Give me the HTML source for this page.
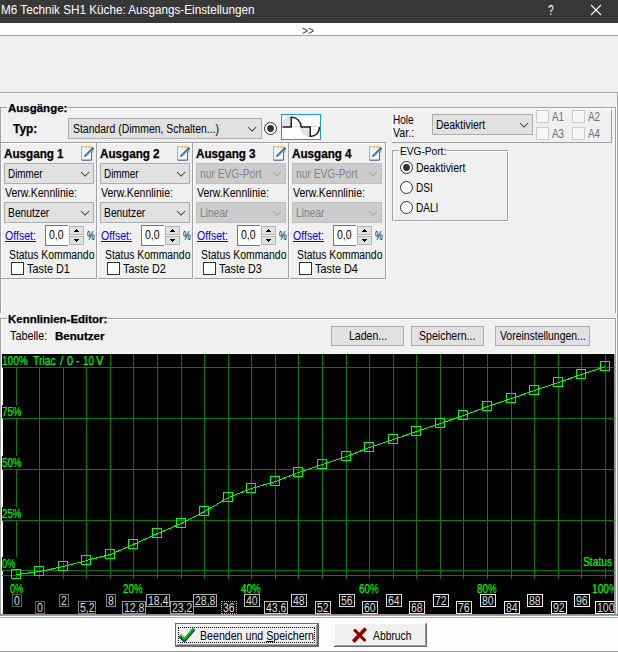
<!DOCTYPE html>
<html><head><meta charset="utf-8"><title>M6 Technik SH1 Küche: Ausgangs-Einstellungen</title>
<style>
html,body{margin:0;padding:0;}
body{width:618px;height:652px;background:#f0f0f0;position:relative;overflow:hidden;font-family:"Liberation Sans",sans-serif;font-size:11px;}
body>div,body>span,body>svg{position:absolute;box-sizing:content-box;}
.t{white-space:nowrap;transform-origin:0 50%;display:block;}
</style></head><body>
<div style="left:0px;top:0px;width:618px;height:23px;background:#383838;"></div>
<span class="t" style="left:1.20px;top:1.50px;height:16px;line-height:16px;font-size:12px;color:#fff;transform:scaleX(0.9752);">M6 Technik SH1 Küche: Ausgangs-Einstellungen</span>
<span class="t" style="left:548.40px;top:2.20px;height:16px;line-height:16px;font-size:14px;color:#fff;transform:scaleX(0.7192);">?</span>
<svg style="left:590px;top:4px" width="12" height="12" viewBox="0 0 12 12"><path d="M1 1 L11 11 M11 1 L1 11" stroke="#fff" stroke-width="1.2" fill="none"/></svg>
<div style="left:0px;top:23px;width:618px;height:12px;background:#fff;"></div>
<span class="t" style="left:302.00px;top:22.50px;height:16px;line-height:16px;font-size:13px;color:#2e3f58;transform:scaleX(0.7837);">&gt;&gt;</span>
<div style="left:0px;top:35px;width:618px;height:1px;background:#a0a0a0;"></div>
<div style="left:0px;top:92px;width:618px;height:1px;background:#a0a0a0;"></div>
<div style="left:0px;top:93px;width:617px;height:1px;background:#ffffff;"></div>
<div style="left:617px;top:92px;width:1px;height:526px;background:#a0a0a0;"></div>
<div style="left:0px;top:107px;width:616px;height:1px;background:#a0a0a0;"></div>
<div style="left:1px;top:108px;width:615px;height:1px;background:#ffffff;"></div>
<div style="left:0px;top:107px;width:1px;height:206px;background:#a0a0a0;"></div>
<div style="left:1px;top:108px;width:1px;height:205px;background:#ffffff;"></div>
<div style="left:615px;top:107px;width:1px;height:206px;background:#a0a0a0;"></div>
<div style="left:616px;top:107px;width:1px;height:206px;background:#ffffff;"></div>
<span class="t" style="left:8.20px;top:100.00px;height:16px;line-height:16px;font-size:11px;color:#000;transform:scaleX(1.0433);font-weight:bold;-webkit-text-stroke:0.25px #000;background:#f0f0f0;padding:0 0 0 1px;margin-left:-1px;">Ausgänge:</span>
<span class="t" style="left:12.60px;top:121.00px;height:16px;line-height:16px;font-size:12.5px;color:#000;transform:scaleX(0.9505);font-weight:bold;-webkit-text-stroke:0.25px #000;">Typ:</span>
<div style="left:68px;top:118px;width:192px;height:19px;background:#e1e1e1;border:1px solid #adadad;"></div>
<span class="t" style="left:72.60px;top:121.00px;height:16px;line-height:16px;font-size:12.5px;color:#000;transform:scaleX(0.8339);">Standard (Dimmen, Schalten...)</span>
<svg style="left:247px;top:125.9px" width="11" height="7" viewBox="-1 -1 11 7"><path d="M0 0 L4.1 4.1 L8.2 0" fill="none" stroke="#404040" stroke-width="1.05"/></svg>
<svg style="left:264px;top:122px" width="13" height="13" viewBox="0 0 13 13"><circle cx="6.5" cy="6.5" r="6" fill="#fff" stroke="#333" stroke-width="1"/><circle cx="6.5" cy="6.5" r="3.4" fill="#333"/></svg>
<div style="left:281px;top:114px;width:38px;height:24px;background:#fff;border:1px solid #1c96e4;"></div>
<svg style="left:282px;top:115px" width="38" height="24" viewBox="282 115 38 24">
<defs><pattern id="h" width="2.5" height="2.5" patternUnits="userSpaceOnUse"><path d="M0 2.5 L2.5 0" stroke="#c4c4c4" stroke-width="0.7"/></pattern></defs>
<path d="M282.3 126.7 C282.5 121 286 117.2 291.5 117 L291.5 126.7 Z" fill="#f1f1f1" stroke="#c0c0c0" stroke-width="0.6"/>
<path d="M282.3 126.7 C282.5 121 286 117.2 291.5 117 L291.5 126.7 Z" fill="url(#h)"/>
<path d="M301 126.7 C301.3 132.5 305 136.4 310.5 136.5 L310.5 126.7 Z" fill="#f1f1f1" stroke="#c0c0c0" stroke-width="0.6"/>
<path d="M301 126.7 C301.3 132.5 305 136.4 310.5 136.5 L310.5 126.7 Z" fill="url(#h)"/>
<path d="M282 126.6 L320 126.6" stroke="#dcdcdc" stroke-width="1"/>
<path d="M282.5 126.9 L291.2 126.9 L291.2 117.3 C296.5 117 300.8 121 301.2 126.9 L310.2 126.9 L310.2 136.2 C315.5 136.7 319.2 133 319.6 126.9" fill="none" stroke="#202020" stroke-width="1.5" stroke-linejoin="miter"/>
</svg>
<div style="left:1px;top:142px;width:385px;height:1px;background:#a0a0a0;"></div>
<div style="left:2px;top:143px;width:383px;height:1px;background:#ffffff;"></div>
<div style="left:1px;top:278px;width:385px;height:1px;background:#a0a0a0;"></div>
<div style="left:1px;top:279px;width:386px;height:1px;background:#f8f8f8;"></div>
<div style="left:96px;top:142px;width:1px;height:137px;background:#a0a0a0;"></div>
<div style="left:97px;top:143px;width:1px;height:136px;background:#ffffff;"></div>
<span class="t" style="left:4.00px;top:146.00px;height:16px;line-height:16px;font-size:12.5px;color:#000;transform:scaleX(0.9327);font-weight:bold;-webkit-text-stroke:0.25px #000;">Ausgang 1</span>
<svg style="left:79px;top:144px" width="16" height="18" viewBox="0 0 16 18">
<rect x="2.5" y="2.6" width="10" height="13.6" rx="0.8" fill="#edf7f1" stroke="none"/>
<path d="M2.5 3 L2.5 16" stroke="#6f9be2" stroke-width="1" stroke-dasharray="1.6 0.7"/>
<path d="M2.6 16.2 L12.4 16.2" stroke="#3d5c9b" stroke-width="1.1"/>
<path d="M12.6 7.5 L12.6 16.2" stroke="#50608a" stroke-width="1"/>
<path d="M2.3 2.7 L12 2.7" stroke="#f2a338" stroke-width="1.5" stroke-dasharray="1.3 0.9"/>
<path d="M4.8 4.5 L9 4.5 M4.5 13.8 L11 13.8" stroke="#ffffff" stroke-width="1.2"/>
<path d="M4.9 13.1 L6.0 12.0" stroke="#cfe0f0" stroke-width="1.4"/>
<path d="M5.7 12.3 L13.5 4.5" stroke="#1f70cc" stroke-width="1.9"/>
<path d="M6.0 11.2 L12.9 4.3" stroke="#6db0ee" stroke-width="0.6"/>
<path d="M13.0 5.0 L14.3 3.7" stroke="#3c4558" stroke-width="2.1"/>
<path d="M14.1 5.6 L13.6 8.2" stroke="#7a8294" stroke-width="1"/>
</svg>
<div style="left:4px;top:163px;width:88px;height:19px;background:#e1e1e1;border:1px solid #adadad;"></div>
<span class="t" style="left:8.40px;top:166.00px;height:16px;line-height:16px;font-size:12.5px;color:#000;transform:scaleX(0.7909);">Dimmer</span>
<svg style="left:80px;top:170.6px" width="11" height="7" viewBox="-1 -1 11 7"><path d="M0 0 L4.1 4.1 L8.2 0" fill="none" stroke="#404040" stroke-width="1.05"/></svg>
<span class="t" style="left:4.70px;top:185.00px;height:16px;line-height:16px;font-size:12.5px;color:#000;transform:scaleX(0.8412);">Verw.Kennlinie:</span>
<div style="left:4px;top:202px;width:88px;height:19px;background:#e1e1e1;border:1px solid #adadad;"></div>
<span class="t" style="left:8.40px;top:205.00px;height:16px;line-height:16px;font-size:12.5px;color:#000;transform:scaleX(0.8255);">Benutzer</span>
<svg style="left:80px;top:209.6px" width="11" height="7" viewBox="-1 -1 11 7"><path d="M0 0 L4.1 4.1 L8.2 0" fill="none" stroke="#404040" stroke-width="1.05"/></svg>
<span class="t" style="left:4.70px;top:228.00px;height:16px;line-height:16px;font-size:12.5px;color:#0000ff;transform:scaleX(0.8472);text-decoration:underline;">Offset:</span>
<div style="left:45px;top:225px;width:22px;height:19px;background:#fff;border:1px solid #7a7a7a;border-right:none;"></div>
<span class="t" style="left:48.50px;top:227.00px;height:16px;line-height:16px;font-size:12.5px;color:#000;transform:scaleX(0.8402);">0,0</span>
<div style="left:69px;top:226px;width:13px;height:7px;background:#e1e1e1;border:1px solid #b4b4b4;"></div>
<div style="left:69px;top:236px;width:13px;height:7px;background:#e1e1e1;border:1px solid #b4b4b4;"></div>
<svg style="left:74px;top:229px" width="5" height="3" viewBox="0 0 5 3" shape-rendering="crispEdges"><path d="M2 0h1v1h1v1h1v1h-5v-1h1v-1h1z" fill="#000"/></svg>
<svg style="left:74px;top:239px" width="5" height="3" viewBox="0 0 5 3" shape-rendering="crispEdges"><path d="M0 0h5v1h-1v1h-1v1h-1v-1h-1v-1h-1z" fill="#000"/></svg>
<span class="t" style="left:87.00px;top:228.00px;height:16px;line-height:16px;font-size:12.5px;color:#000;transform:scaleX(0.7018);">%</span>
<span class="t" style="left:9.30px;top:247.00px;height:16px;line-height:16px;font-size:12.5px;color:#000;transform:scaleX(0.8305);">Status Kommando</span>
<div style="left:11px;top:262px;width:11px;height:11px;background:#fff;border:1px solid #333333;"></div>
<span class="t" style="left:27.20px;top:261.00px;height:16px;line-height:16px;font-size:12.5px;color:#000;transform:scaleX(0.8697);">Taste D1</span>
<div style="left:192px;top:142px;width:1px;height:137px;background:#a0a0a0;"></div>
<div style="left:193px;top:143px;width:1px;height:136px;background:#ffffff;"></div>
<span class="t" style="left:100.00px;top:146.00px;height:16px;line-height:16px;font-size:12.5px;color:#000;transform:scaleX(0.9327);font-weight:bold;-webkit-text-stroke:0.25px #000;">Ausgang 2</span>
<svg style="left:175px;top:144px" width="16" height="18" viewBox="0 0 16 18">
<rect x="2.5" y="2.6" width="10" height="13.6" rx="0.8" fill="#edf7f1" stroke="none"/>
<path d="M2.5 3 L2.5 16" stroke="#6f9be2" stroke-width="1" stroke-dasharray="1.6 0.7"/>
<path d="M2.6 16.2 L12.4 16.2" stroke="#3d5c9b" stroke-width="1.1"/>
<path d="M12.6 7.5 L12.6 16.2" stroke="#50608a" stroke-width="1"/>
<path d="M2.3 2.7 L12 2.7" stroke="#f2a338" stroke-width="1.5" stroke-dasharray="1.3 0.9"/>
<path d="M4.8 4.5 L9 4.5 M4.5 13.8 L11 13.8" stroke="#ffffff" stroke-width="1.2"/>
<path d="M4.9 13.1 L6.0 12.0" stroke="#cfe0f0" stroke-width="1.4"/>
<path d="M5.7 12.3 L13.5 4.5" stroke="#1f70cc" stroke-width="1.9"/>
<path d="M6.0 11.2 L12.9 4.3" stroke="#6db0ee" stroke-width="0.6"/>
<path d="M13.0 5.0 L14.3 3.7" stroke="#3c4558" stroke-width="2.1"/>
<path d="M14.1 5.6 L13.6 8.2" stroke="#7a8294" stroke-width="1"/>
</svg>
<div style="left:100px;top:163px;width:88px;height:19px;background:#e1e1e1;border:1px solid #adadad;"></div>
<span class="t" style="left:104.40px;top:166.00px;height:16px;line-height:16px;font-size:12.5px;color:#000;transform:scaleX(0.7909);">Dimmer</span>
<svg style="left:176px;top:170.6px" width="11" height="7" viewBox="-1 -1 11 7"><path d="M0 0 L4.1 4.1 L8.2 0" fill="none" stroke="#404040" stroke-width="1.05"/></svg>
<span class="t" style="left:100.70px;top:185.00px;height:16px;line-height:16px;font-size:12.5px;color:#000;transform:scaleX(0.8412);">Verw.Kennlinie:</span>
<div style="left:100px;top:202px;width:88px;height:19px;background:#e1e1e1;border:1px solid #adadad;"></div>
<span class="t" style="left:104.40px;top:205.00px;height:16px;line-height:16px;font-size:12.5px;color:#000;transform:scaleX(0.8255);">Benutzer</span>
<svg style="left:176px;top:209.6px" width="11" height="7" viewBox="-1 -1 11 7"><path d="M0 0 L4.1 4.1 L8.2 0" fill="none" stroke="#404040" stroke-width="1.05"/></svg>
<span class="t" style="left:100.70px;top:228.00px;height:16px;line-height:16px;font-size:12.5px;color:#0000ff;transform:scaleX(0.8472);text-decoration:underline;">Offset:</span>
<div style="left:141px;top:225px;width:22px;height:19px;background:#fff;border:1px solid #7a7a7a;border-right:none;"></div>
<span class="t" style="left:144.50px;top:227.00px;height:16px;line-height:16px;font-size:12.5px;color:#000;transform:scaleX(0.8402);">0,0</span>
<div style="left:165px;top:226px;width:13px;height:7px;background:#e1e1e1;border:1px solid #b4b4b4;"></div>
<div style="left:165px;top:236px;width:13px;height:7px;background:#e1e1e1;border:1px solid #b4b4b4;"></div>
<svg style="left:170px;top:229px" width="5" height="3" viewBox="0 0 5 3" shape-rendering="crispEdges"><path d="M2 0h1v1h1v1h1v1h-5v-1h1v-1h1z" fill="#000"/></svg>
<svg style="left:170px;top:239px" width="5" height="3" viewBox="0 0 5 3" shape-rendering="crispEdges"><path d="M0 0h5v1h-1v1h-1v1h-1v-1h-1v-1h-1z" fill="#000"/></svg>
<span class="t" style="left:183.00px;top:228.00px;height:16px;line-height:16px;font-size:12.5px;color:#000;transform:scaleX(0.7018);">%</span>
<span class="t" style="left:105.30px;top:247.00px;height:16px;line-height:16px;font-size:12.5px;color:#000;transform:scaleX(0.8305);">Status Kommando</span>
<div style="left:107px;top:262px;width:11px;height:11px;background:#fff;border:1px solid #333333;"></div>
<span class="t" style="left:123.20px;top:261.00px;height:16px;line-height:16px;font-size:12.5px;color:#000;transform:scaleX(0.8697);">Taste D2</span>
<div style="left:288px;top:142px;width:1px;height:137px;background:#a0a0a0;"></div>
<div style="left:289px;top:143px;width:1px;height:136px;background:#ffffff;"></div>
<span class="t" style="left:196.00px;top:146.00px;height:16px;line-height:16px;font-size:12.5px;color:#000;transform:scaleX(0.9327);font-weight:bold;-webkit-text-stroke:0.25px #000;">Ausgang 3</span>
<svg style="left:271px;top:144px" width="16" height="18" viewBox="0 0 16 18">
<rect x="2.5" y="2.6" width="10" height="13.6" rx="0.8" fill="#edf7f1" stroke="none"/>
<path d="M2.5 3 L2.5 16" stroke="#6f9be2" stroke-width="1" stroke-dasharray="1.6 0.7"/>
<path d="M2.6 16.2 L12.4 16.2" stroke="#3d5c9b" stroke-width="1.1"/>
<path d="M12.6 7.5 L12.6 16.2" stroke="#50608a" stroke-width="1"/>
<path d="M2.3 2.7 L12 2.7" stroke="#f2a338" stroke-width="1.5" stroke-dasharray="1.3 0.9"/>
<path d="M4.8 4.5 L9 4.5 M4.5 13.8 L11 13.8" stroke="#ffffff" stroke-width="1.2"/>
<path d="M4.9 13.1 L6.0 12.0" stroke="#cfe0f0" stroke-width="1.4"/>
<path d="M5.7 12.3 L13.5 4.5" stroke="#1f70cc" stroke-width="1.9"/>
<path d="M6.0 11.2 L12.9 4.3" stroke="#6db0ee" stroke-width="0.6"/>
<path d="M13.0 5.0 L14.3 3.7" stroke="#3c4558" stroke-width="2.1"/>
<path d="M14.1 5.6 L13.6 8.2" stroke="#7a8294" stroke-width="1"/>
</svg>
<div style="left:196px;top:163px;width:88px;height:19px;background:#cccccc;border:1px solid #bfbfbf;"></div>
<span class="t" style="left:200.40px;top:166.00px;height:16px;line-height:16px;font-size:12.5px;color:#838383;transform:scaleX(0.8197);">nur EVG-Port</span>
<svg style="left:272px;top:170.6px" width="11" height="7" viewBox="-1 -1 11 7"><path d="M0 0 L4.1 4.1 L8.2 0" fill="none" stroke="#a6a6a6" stroke-width="1.05"/></svg>
<span class="t" style="left:196.70px;top:185.00px;height:16px;line-height:16px;font-size:12.5px;color:#000;transform:scaleX(0.8412);">Verw.Kennlinie:</span>
<div style="left:196px;top:202px;width:88px;height:19px;background:#cccccc;border:1px solid #bfbfbf;"></div>
<span class="t" style="left:200.40px;top:205.00px;height:16px;line-height:16px;font-size:12.5px;color:#838383;transform:scaleX(0.8202);">Linear</span>
<svg style="left:272px;top:209.6px" width="11" height="7" viewBox="-1 -1 11 7"><path d="M0 0 L4.1 4.1 L8.2 0" fill="none" stroke="#a6a6a6" stroke-width="1.05"/></svg>
<span class="t" style="left:196.70px;top:228.00px;height:16px;line-height:16px;font-size:12.5px;color:#0000ff;transform:scaleX(0.8472);text-decoration:underline;">Offset:</span>
<div style="left:237px;top:225px;width:22px;height:19px;background:#fff;border:1px solid #7a7a7a;border-right:none;"></div>
<span class="t" style="left:240.50px;top:227.00px;height:16px;line-height:16px;font-size:12.5px;color:#000;transform:scaleX(0.8402);">0,0</span>
<div style="left:261px;top:226px;width:13px;height:7px;background:#e1e1e1;border:1px solid #b4b4b4;"></div>
<div style="left:261px;top:236px;width:13px;height:7px;background:#e1e1e1;border:1px solid #b4b4b4;"></div>
<svg style="left:266px;top:229px" width="5" height="3" viewBox="0 0 5 3" shape-rendering="crispEdges"><path d="M2 0h1v1h1v1h1v1h-5v-1h1v-1h1z" fill="#000"/></svg>
<svg style="left:266px;top:239px" width="5" height="3" viewBox="0 0 5 3" shape-rendering="crispEdges"><path d="M0 0h5v1h-1v1h-1v1h-1v-1h-1v-1h-1z" fill="#000"/></svg>
<span class="t" style="left:279.00px;top:228.00px;height:16px;line-height:16px;font-size:12.5px;color:#000;transform:scaleX(0.7018);">%</span>
<span class="t" style="left:201.30px;top:247.00px;height:16px;line-height:16px;font-size:12.5px;color:#000;transform:scaleX(0.8305);">Status Kommando</span>
<div style="left:203px;top:262px;width:11px;height:11px;background:#fff;border:1px solid #333333;"></div>
<span class="t" style="left:219.20px;top:261.00px;height:16px;line-height:16px;font-size:12.5px;color:#000;transform:scaleX(0.8697);">Taste D3</span>
<div style="left:385px;top:142px;width:1px;height:137px;background:#a0a0a0;"></div>
<div style="left:386px;top:143px;width:1px;height:136px;background:#ffffff;"></div>
<span class="t" style="left:292.00px;top:146.00px;height:16px;line-height:16px;font-size:12.5px;color:#000;transform:scaleX(0.9327);font-weight:bold;-webkit-text-stroke:0.25px #000;">Ausgang 4</span>
<svg style="left:367px;top:144px" width="16" height="18" viewBox="0 0 16 18">
<rect x="2.5" y="2.6" width="10" height="13.6" rx="0.8" fill="#edf7f1" stroke="none"/>
<path d="M2.5 3 L2.5 16" stroke="#6f9be2" stroke-width="1" stroke-dasharray="1.6 0.7"/>
<path d="M2.6 16.2 L12.4 16.2" stroke="#3d5c9b" stroke-width="1.1"/>
<path d="M12.6 7.5 L12.6 16.2" stroke="#50608a" stroke-width="1"/>
<path d="M2.3 2.7 L12 2.7" stroke="#f2a338" stroke-width="1.5" stroke-dasharray="1.3 0.9"/>
<path d="M4.8 4.5 L9 4.5 M4.5 13.8 L11 13.8" stroke="#ffffff" stroke-width="1.2"/>
<path d="M4.9 13.1 L6.0 12.0" stroke="#cfe0f0" stroke-width="1.4"/>
<path d="M5.7 12.3 L13.5 4.5" stroke="#1f70cc" stroke-width="1.9"/>
<path d="M6.0 11.2 L12.9 4.3" stroke="#6db0ee" stroke-width="0.6"/>
<path d="M13.0 5.0 L14.3 3.7" stroke="#3c4558" stroke-width="2.1"/>
<path d="M14.1 5.6 L13.6 8.2" stroke="#7a8294" stroke-width="1"/>
</svg>
<div style="left:292px;top:163px;width:88px;height:19px;background:#cccccc;border:1px solid #bfbfbf;"></div>
<span class="t" style="left:296.40px;top:166.00px;height:16px;line-height:16px;font-size:12.5px;color:#838383;transform:scaleX(0.8197);">nur EVG-Port</span>
<svg style="left:368px;top:170.6px" width="11" height="7" viewBox="-1 -1 11 7"><path d="M0 0 L4.1 4.1 L8.2 0" fill="none" stroke="#a6a6a6" stroke-width="1.05"/></svg>
<span class="t" style="left:292.70px;top:185.00px;height:16px;line-height:16px;font-size:12.5px;color:#000;transform:scaleX(0.8412);">Verw.Kennlinie:</span>
<div style="left:292px;top:202px;width:88px;height:19px;background:#cccccc;border:1px solid #bfbfbf;"></div>
<span class="t" style="left:296.40px;top:205.00px;height:16px;line-height:16px;font-size:12.5px;color:#838383;transform:scaleX(0.8202);">Linear</span>
<svg style="left:368px;top:209.6px" width="11" height="7" viewBox="-1 -1 11 7"><path d="M0 0 L4.1 4.1 L8.2 0" fill="none" stroke="#a6a6a6" stroke-width="1.05"/></svg>
<span class="t" style="left:292.70px;top:228.00px;height:16px;line-height:16px;font-size:12.5px;color:#0000ff;transform:scaleX(0.8472);text-decoration:underline;">Offset:</span>
<div style="left:333px;top:225px;width:22px;height:19px;background:#fff;border:1px solid #7a7a7a;border-right:none;"></div>
<span class="t" style="left:336.50px;top:227.00px;height:16px;line-height:16px;font-size:12.5px;color:#000;transform:scaleX(0.8402);">0,0</span>
<div style="left:357px;top:226px;width:13px;height:7px;background:#e1e1e1;border:1px solid #b4b4b4;"></div>
<div style="left:357px;top:236px;width:13px;height:7px;background:#e1e1e1;border:1px solid #b4b4b4;"></div>
<svg style="left:362px;top:229px" width="5" height="3" viewBox="0 0 5 3" shape-rendering="crispEdges"><path d="M2 0h1v1h1v1h1v1h-5v-1h1v-1h1z" fill="#000"/></svg>
<svg style="left:362px;top:239px" width="5" height="3" viewBox="0 0 5 3" shape-rendering="crispEdges"><path d="M0 0h5v1h-1v1h-1v1h-1v-1h-1v-1h-1z" fill="#000"/></svg>
<span class="t" style="left:375.00px;top:228.00px;height:16px;line-height:16px;font-size:12.5px;color:#000;transform:scaleX(0.7018);">%</span>
<span class="t" style="left:297.30px;top:247.00px;height:16px;line-height:16px;font-size:12.5px;color:#000;transform:scaleX(0.8305);">Status Kommando</span>
<div style="left:299px;top:262px;width:11px;height:11px;background:#fff;border:1px solid #333333;"></div>
<span class="t" style="left:315.20px;top:261.00px;height:16px;line-height:16px;font-size:12.5px;color:#000;transform:scaleX(0.8697);">Taste D4</span>
<div style="left:392px;top:110px;width:220px;height:1px;background:#ffffff;"></div>
<div style="left:392px;top:110px;width:1px;height:33px;background:#ffffff;"></div>
<div style="left:392px;top:142px;width:220px;height:1px;background:#a0a0a0;"></div>
<div style="left:611px;top:110px;width:1px;height:33px;background:#a0a0a0;"></div>
<span class="t" style="left:392.60px;top:112.00px;height:16px;line-height:16px;font-size:12.5px;color:#000;transform:scaleX(0.8013);">Hole</span>
<span class="t" style="left:392.60px;top:125.00px;height:16px;line-height:16px;font-size:12.5px;color:#000;transform:scaleX(0.8515);">Var.:</span>
<div style="left:432px;top:114px;width:99px;height:19px;background:#e1e1e1;border:1px solid #adadad;"></div>
<span class="t" style="left:436.40px;top:117.00px;height:16px;line-height:16px;font-size:12.5px;color:#000;transform:scaleX(0.8332);">Deaktiviert</span>
<svg style="left:518.9px;top:121.7px" width="11" height="7" viewBox="-1 -1 11 7"><path d="M0 0 L4.1 4.1 L8.2 0" fill="none" stroke="#404040" stroke-width="1.05"/></svg>
<div style="left:535px;top:109px;width:34px;height:15px;background:#f0f0f0;"></div>
<div style="left:536px;top:110px;width:11px;height:11px;background:#f6f6f6;border:1px solid #cccccc;"></div>
<span class="t" style="left:552.10px;top:109.00px;height:16px;line-height:16px;font-size:12.5px;color:#6e6e6e;transform:scaleX(0.7848);">A1</span>
<div style="left:571px;top:109px;width:34px;height:15px;background:#f0f0f0;"></div>
<div style="left:572px;top:110px;width:11px;height:11px;background:#f6f6f6;border:1px solid #cccccc;"></div>
<span class="t" style="left:588.10px;top:109.00px;height:16px;line-height:16px;font-size:12.5px;color:#6e6e6e;transform:scaleX(0.7848);">A2</span>
<div style="left:535px;top:126px;width:34px;height:15px;background:#f0f0f0;"></div>
<div style="left:536px;top:127px;width:11px;height:11px;background:#f6f6f6;border:1px solid #cccccc;"></div>
<span class="t" style="left:552.10px;top:126.00px;height:16px;line-height:16px;font-size:12.5px;color:#6e6e6e;transform:scaleX(0.7848);">A3</span>
<div style="left:571px;top:126px;width:34px;height:15px;background:#f0f0f0;"></div>
<div style="left:572px;top:127px;width:11px;height:11px;background:#f6f6f6;border:1px solid #cccccc;"></div>
<span class="t" style="left:588.10px;top:126.00px;height:16px;line-height:16px;font-size:12.5px;color:#6e6e6e;transform:scaleX(0.7848);">A4</span>
<div style="left:392px;top:150px;width:114px;height:69px;background:transparent;border:1px solid #a0a0a0;"></div>
<div style="left:393px;top:151px;width:114px;height:69px;background:transparent;border:1px solid #ffffff;border-right:none;border-bottom:none;"></div>
<div style="left:508px;top:150px;width:1px;height:72px;background:#ffffff;"></div>
<div style="left:392px;top:221px;width:117px;height:1px;background:#ffffff;"></div>
<span class="t" style="left:400.40px;top:143.00px;height:16px;line-height:16px;font-size:11px;color:#000;transform:scaleX(0.9237);background:#f0f0f0;padding:0 0 0 1px;margin-left:-1px;">EVG-Port:</span>
<svg style="left:400px;top:161px" width="13" height="13" viewBox="0 0 13 13"><circle cx="6.5" cy="6.5" r="6" fill="#fff" stroke="#333" stroke-width="1"/><circle cx="6.5" cy="6.5" r="3.4" fill="#333"/></svg>
<span class="t" style="left:416.40px;top:160.00px;height:16px;line-height:16px;font-size:12.5px;color:#000;transform:scaleX(0.8366);">Deaktiviert</span>
<svg style="left:400px;top:181px" width="13" height="13" viewBox="0 0 13 13"><circle cx="6.5" cy="6.5" r="6" fill="#fff" stroke="#333" stroke-width="1"/></svg>
<span class="t" style="left:416.40px;top:180.00px;height:16px;line-height:16px;font-size:12.5px;color:#000;transform:scaleX(0.8062);">DSI</span>
<svg style="left:400px;top:201px" width="13" height="13" viewBox="0 0 13 13"><circle cx="6.5" cy="6.5" r="6" fill="#fff" stroke="#333" stroke-width="1"/></svg>
<span class="t" style="left:416.40px;top:200.00px;height:16px;line-height:16px;font-size:12.5px;color:#000;transform:scaleX(0.8060);">DALI</span>
<div style="left:0px;top:318px;width:616px;height:1px;background:#a0a0a0;"></div>
<div style="left:1px;top:319px;width:615px;height:1px;background:#ffffff;"></div>
<div style="left:0px;top:318px;width:1px;height:298px;background:#a0a0a0;"></div>
<div style="left:1px;top:319px;width:1px;height:297px;background:#ffffff;"></div>
<div style="left:615px;top:318px;width:1px;height:298px;background:#a0a0a0;"></div>
<div style="left:616px;top:318px;width:1px;height:299px;background:#ffffff;"></div>
<span class="t" style="left:8.40px;top:311.00px;height:16px;line-height:16px;font-size:11px;color:#000;transform:scaleX(1.0417);font-weight:bold;-webkit-text-stroke:0.25px #000;background:#f0f0f0;padding:0 0 0 1px;margin-left:-1px;">Kennlinien-Editor:</span>
<span class="t" style="left:10.10px;top:328.00px;height:16px;line-height:16px;font-size:12.5px;color:#000;transform:scaleX(0.8634);">Tabelle:</span>
<span class="t" style="left:54.60px;top:328.00px;height:16px;line-height:16px;font-size:11px;color:#000;transform:scaleX(1.0518);font-weight:bold;-webkit-text-stroke:0.25px #000;">Benutzer</span>
<div style="left:331px;top:326px;width:71px;height:18px;background:#e1e1e1;border:1px solid #adadad;"></div>
<span class="t" style="left:348.60px;top:328.00px;height:16px;line-height:16px;font-size:12.5px;color:#000;transform:scaleX(0.8433);">Laden...</span>
<div style="left:411px;top:326px;width:71px;height:18px;background:#e1e1e1;border:1px solid #adadad;"></div>
<span class="t" style="left:419.40px;top:328.00px;height:16px;line-height:16px;font-size:12.5px;color:#000;transform:scaleX(0.8455);">Speichern...</span>
<div style="left:495px;top:326px;width:93px;height:18px;background:#e1e1e1;border:1px solid #adadad;"></div>
<span class="t" style="left:499.50px;top:328.00px;height:16px;line-height:16px;font-size:12.5px;color:#000;transform:scaleX(0.8332);">Voreinstellungen...</span>
<div style="left:2px;top:353px;width:613px;height:1px;background:#ffffff;"></div>
<div style="left:2px;top:353px;width:1px;height:262px;background:#ffffff;"></div>
<svg style="left:3px;top:354px" width="612" height="260" viewBox="3 354 612 260" shape-rendering="crispEdges"><rect x="3" y="354" width="612" height="260" fill="#000"/><rect x="16" y="354" width="1" height="225" fill="#008000"/><rect x="39" y="354" width="1" height="225" fill="#008000"/><rect x="63" y="354" width="1" height="225" fill="#008000"/><rect x="86" y="354" width="1" height="225" fill="#008000"/><rect x="110" y="354" width="1" height="225" fill="#008000"/><rect x="133" y="354" width="1" height="225" fill="#008000"/><rect x="157" y="354" width="1" height="225" fill="#008000"/><rect x="181" y="354" width="1" height="225" fill="#008000"/><rect x="204" y="354" width="1" height="225" fill="#008000"/><rect x="228" y="354" width="1" height="225" fill="#008000"/><rect x="251" y="354" width="1" height="225" fill="#008000"/><rect x="275" y="354" width="1" height="225" fill="#008000"/><rect x="298" y="354" width="1" height="225" fill="#008000"/><rect x="322" y="354" width="1" height="225" fill="#008000"/><rect x="346" y="354" width="1" height="225" fill="#008000"/><rect x="369" y="354" width="1" height="225" fill="#008000"/><rect x="393" y="354" width="1" height="225" fill="#008000"/><rect x="416" y="354" width="1" height="225" fill="#008000"/><rect x="440" y="354" width="1" height="225" fill="#008000"/><rect x="463" y="354" width="1" height="225" fill="#008000"/><rect x="487" y="354" width="1" height="225" fill="#008000"/><rect x="511" y="354" width="1" height="225" fill="#008000"/><rect x="534" y="354" width="1" height="225" fill="#008000"/><rect x="558" y="354" width="1" height="225" fill="#008000"/><rect x="581" y="354" width="1" height="225" fill="#008000"/><rect x="605" y="354" width="1" height="225" fill="#008000"/><rect x="3" y="367" width="612" height="1" fill="#008000"/><rect x="3" y="418" width="612" height="1" fill="#008000"/><rect x="3" y="469" width="612" height="1" fill="#008000"/><rect x="3" y="520" width="612" height="1" fill="#008000"/><rect x="3" y="570" width="612" height="1" fill="#008000"/><rect x="3" y="575" width="612" height="1" fill="#008000"/></svg>
<div style="left:2px;top:367px;width:1px;height:1px;background:#008000;"></div>
<div style="left:2px;top:418px;width:1px;height:1px;background:#008000;"></div>
<div style="left:2px;top:469px;width:1px;height:1px;background:#008000;"></div>
<div style="left:2px;top:520px;width:1px;height:1px;background:#008000;"></div>
<div style="left:2px;top:570px;width:1px;height:1px;background:#008000;"></div>
<div style="left:2px;top:575px;width:1px;height:1px;background:#008000;"></div>
<div style="left:2px;top:354px;width:105px;height:13px;background:#000;"></div>
<span class="t" style="left:2.20px;top:353.00px;height:16px;line-height:16px;font-size:12.5px;color:#00ff00;transform:scaleX(0.8007);-webkit-text-stroke:0.15px #00ff00;">100%</span>
<span class="t" style="left:32.80px;top:353.00px;height:16px;line-height:16px;font-size:12.5px;color:#00ff00;transform:scaleX(0.8274);-webkit-text-stroke:0.15px #00ff00;">Triac</span>
<span class="t" style="left:60.30px;top:353.00px;height:16px;line-height:16px;font-size:12.5px;color:#00ff00;transform:scaleX(0.9503);-webkit-text-stroke:0.15px #00ff00;">/</span>
<span class="t" style="left:66.60px;top:353.00px;height:16px;line-height:16px;font-size:12.5px;color:#00ff00;transform:scaleX(0.8774);-webkit-text-stroke:0.15px #00ff00;">0</span>
<span class="t" style="left:75.70px;top:353.00px;height:16px;line-height:16px;font-size:12.5px;color:#00ff00;transform:scaleX(0.8407);-webkit-text-stroke:0.15px #00ff00;">-</span>
<span class="t" style="left:82.60px;top:353.00px;height:16px;line-height:16px;font-size:12.5px;color:#00ff00;transform:scaleX(0.7767);-webkit-text-stroke:0.15px #00ff00;">10</span>
<span class="t" style="left:95.90px;top:353.00px;height:16px;line-height:16px;font-size:12.5px;color:#00ff00;transform:scaleX(0.8995);-webkit-text-stroke:0.15px #00ff00;">V</span>
<div style="left:2px;top:405px;width:22px;height:13px;background:#000;"></div>
<span class="t" style="left:1.90px;top:404.00px;height:16px;line-height:16px;font-size:12.5px;color:#00ff00;transform:scaleX(0.7754);-webkit-text-stroke:0.15px #00ff00;">75%</span>
<div style="left:2px;top:456px;width:22px;height:13px;background:#000;"></div>
<span class="t" style="left:1.90px;top:455.00px;height:16px;line-height:16px;font-size:12.5px;color:#00ff00;transform:scaleX(0.7754);-webkit-text-stroke:0.15px #00ff00;">50%</span>
<div style="left:2px;top:507px;width:22px;height:13px;background:#000;"></div>
<span class="t" style="left:1.90px;top:506.00px;height:16px;line-height:16px;font-size:12.5px;color:#00ff00;transform:scaleX(0.7754);-webkit-text-stroke:0.15px #00ff00;">25%</span>
<div style="left:2px;top:557px;width:16px;height:13px;background:#000;"></div>
<span class="t" style="left:1.60px;top:556.00px;height:16px;line-height:16px;font-size:12.5px;color:#00ff00;transform:scaleX(0.7417);-webkit-text-stroke:0.15px #00ff00;">0%</span>
<div style="left:583px;top:555px;width:31px;height:13px;background:#000;"></div>
<span class="t" style="left:583.40px;top:554.00px;height:16px;line-height:16px;font-size:12.5px;color:#00ff00;transform:scaleX(0.8212);-webkit-text-stroke:0.15px #00ff00;">Status</span>
<svg style="left:3px;top:354px" width="612" height="260" viewBox="3 354 612 260" shape-rendering="crispEdges"><polyline fill="none" stroke="#00ff00" stroke-width="1" points="16.5,574.5 39.5,571.5 63.5,566.5 86.5,560.5 110.5,554.5 133.5,544.5 157.5,533.5 181.5,523.5 204.5,511.5 228.5,497.5 251.5,488.5 275.5,481.5 298.5,472.5 322.5,464.5 346.5,456.5 369.5,447.5 393.5,439.5 416.5,431.5 440.5,423.5 463.5,415.5 487.5,406.5 511.5,398.5 534.5,390.5 558.5,382.5 581.5,374.5 605.5,366.5"/><rect x="11.5" y="569.5" width="9" height="9" fill="none" stroke="#00ff00" stroke-width="1"/><rect x="34.5" y="566.5" width="9" height="9" fill="none" stroke="#00ff00" stroke-width="1"/><rect x="58.5" y="561.5" width="9" height="9" fill="none" stroke="#00ff00" stroke-width="1"/><rect x="81.5" y="555.5" width="9" height="9" fill="none" stroke="#00ff00" stroke-width="1"/><rect x="105.5" y="549.5" width="9" height="9" fill="none" stroke="#00ff00" stroke-width="1"/><rect x="128.5" y="539.5" width="9" height="9" fill="none" stroke="#00ff00" stroke-width="1"/><rect x="152.5" y="528.5" width="9" height="9" fill="none" stroke="#00ff00" stroke-width="1"/><rect x="176.5" y="518.5" width="9" height="9" fill="none" stroke="#00ff00" stroke-width="1"/><rect x="199.5" y="506.5" width="9" height="9" fill="none" stroke="#00ff00" stroke-width="1"/><rect x="223.5" y="492.5" width="9" height="9" fill="none" stroke="#00ff00" stroke-width="1"/><rect x="246.5" y="483.5" width="9" height="9" fill="none" stroke="#00ff00" stroke-width="1"/><rect x="270.5" y="476.5" width="9" height="9" fill="none" stroke="#00ff00" stroke-width="1"/><rect x="293.5" y="467.5" width="9" height="9" fill="none" stroke="#00ff00" stroke-width="1"/><rect x="317.5" y="459.5" width="9" height="9" fill="none" stroke="#00ff00" stroke-width="1"/><rect x="341.5" y="451.5" width="9" height="9" fill="none" stroke="#00ff00" stroke-width="1"/><rect x="364.5" y="442.5" width="9" height="9" fill="none" stroke="#00ff00" stroke-width="1"/><rect x="388.5" y="434.5" width="9" height="9" fill="none" stroke="#00ff00" stroke-width="1"/><rect x="411.5" y="426.5" width="9" height="9" fill="none" stroke="#00ff00" stroke-width="1"/><rect x="435.5" y="418.5" width="9" height="9" fill="none" stroke="#00ff00" stroke-width="1"/><rect x="458.5" y="410.5" width="9" height="9" fill="none" stroke="#00ff00" stroke-width="1"/><rect x="482.5" y="401.5" width="9" height="9" fill="none" stroke="#00ff00" stroke-width="1"/><rect x="506.5" y="393.5" width="9" height="9" fill="none" stroke="#00ff00" stroke-width="1"/><rect x="529.5" y="385.5" width="9" height="9" fill="none" stroke="#00ff00" stroke-width="1"/><rect x="553.5" y="377.5" width="9" height="9" fill="none" stroke="#00ff00" stroke-width="1"/><rect x="576.5" y="369.5" width="9" height="9" fill="none" stroke="#00ff00" stroke-width="1"/><rect x="600.5" y="361.5" width="9" height="9" fill="none" stroke="#00ff00" stroke-width="1"/></svg>
<span class="t" style="left:9.70px;top:581.00px;height:16px;line-height:16px;font-size:12.5px;color:#00ff00;transform:scaleX(0.7306);-webkit-text-stroke:0.15px #00ff00;clip-path:inset(0 0 0 0);">0%</span>
<span class="t" style="left:123.45px;top:581.00px;height:16px;line-height:16px;font-size:12.5px;color:#00ff00;transform:scaleX(0.7874);-webkit-text-stroke:0.15px #00ff00;clip-path:inset(0 0 0 0);">20%</span>
<span class="t" style="left:241.45px;top:581.00px;height:16px;line-height:16px;font-size:12.5px;color:#00ff00;transform:scaleX(0.7874);-webkit-text-stroke:0.15px #00ff00;clip-path:inset(0 0 0 0);">40%</span>
<span class="t" style="left:359.45px;top:581.00px;height:16px;line-height:16px;font-size:12.5px;color:#00ff00;transform:scaleX(0.7874);-webkit-text-stroke:0.15px #00ff00;clip-path:inset(0 0 0 0);">60%</span>
<span class="t" style="left:477.45px;top:581.00px;height:16px;line-height:16px;font-size:12.5px;color:#00ff00;transform:scaleX(0.7874);-webkit-text-stroke:0.15px #00ff00;clip-path:inset(0 0 0 0);">80%</span>
<span class="t" style="left:592.30px;top:581.00px;height:16px;line-height:16px;font-size:12.5px;color:#00ff00;transform:scaleX(0.8132);-webkit-text-stroke:0.15px #00ff00;">100%</span>
<div style="left:12px;top:594px;width:8px;height:11px;background:#000;border:1px solid #606060;"></div>
<span class="t" style="left:14.08px;top:593.00px;height:16px;line-height:16px;font-size:12.5px;color:#dcdcdc;transform:scaleX(0.8400);">0</span>
<div style="left:35px;top:601px;width:8px;height:11px;background:#000;border:1px solid #5a5e66;"></div>
<span class="t" style="left:37.08px;top:600.00px;height:16px;line-height:16px;font-size:12.5px;color:#dcdcdc;transform:scaleX(0.8400);">0</span>
<div style="left:59px;top:594px;width:8px;height:11px;background:#000;border:1px solid #747474;"></div>
<span class="t" style="left:61.08px;top:593.00px;height:16px;line-height:16px;font-size:12.5px;color:#dcdcdc;transform:scaleX(0.8400);">2</span>
<div style="left:78px;top:601px;width:16px;height:11px;background:#000;border:1px solid #7f7f7f;"></div>
<span class="t" style="left:79.70px;top:600.00px;height:16px;line-height:16px;font-size:12.5px;color:#dcdcdc;transform:scaleX(0.8400);">5,2</span>
<div style="left:106px;top:594px;width:8px;height:11px;background:#000;border:1px solid #878787;"></div>
<span class="t" style="left:108.08px;top:593.00px;height:16px;line-height:16px;font-size:12.5px;color:#dcdcdc;transform:scaleX(0.8400);">8</span>
<div style="left:122px;top:601px;width:22px;height:11px;background:#000;border:1px solid #929292;"></div>
<span class="t" style="left:123.78px;top:600.00px;height:16px;line-height:16px;font-size:12.5px;color:#dcdcdc;transform:scaleX(0.8400);">12,8</span>
<div style="left:146px;top:594px;width:22px;height:11px;background:#000;border:1px solid #9d9d9d;"></div>
<span class="t" style="left:147.78px;top:593.00px;height:16px;line-height:16px;font-size:12.5px;color:#dcdcdc;transform:scaleX(0.8400);">18,4</span>
<div style="left:170px;top:601px;width:22px;height:11px;background:#000;border:1px solid #a5a5a5;"></div>
<span class="t" style="left:171.78px;top:600.00px;height:16px;line-height:16px;font-size:12.5px;color:#dcdcdc;transform:scaleX(0.8400);">23,2</span>
<div style="left:193px;top:594px;width:22px;height:11px;background:#000;border:1px solid #aeaeae;"></div>
<span class="t" style="left:194.78px;top:593.00px;height:16px;line-height:16px;font-size:12.5px;color:#dcdcdc;transform:scaleX(0.8400);">28,8</span>
<div style="left:221px;top:601px;width:14px;height:11px;background:#000;border:1px dotted #a8a8a8;"></div>
<span class="t" style="left:223.16px;top:600.00px;height:16px;line-height:16px;font-size:12.5px;color:#dcdcdc;transform:scaleX(0.8400);">36</span>
<div style="left:244px;top:594px;width:14px;height:11px;background:#000;border:1px solid #bebebe;"></div>
<span class="t" style="left:246.16px;top:593.00px;height:16px;line-height:16px;font-size:12.5px;color:#dcdcdc;transform:scaleX(0.8400);">40</span>
<div style="left:264px;top:601px;width:22px;height:11px;background:#000;border:1px solid #c2c2c2;"></div>
<span class="t" style="left:265.78px;top:600.00px;height:16px;line-height:16px;font-size:12.5px;color:#dcdcdc;transform:scaleX(0.8400);">43,6</span>
<div style="left:291px;top:594px;width:14px;height:11px;background:#000;border:1px solid #c8c8c8;"></div>
<span class="t" style="left:293.16px;top:593.00px;height:16px;line-height:16px;font-size:12.5px;color:#dcdcdc;transform:scaleX(0.8400);">48</span>
<div style="left:315px;top:601px;width:14px;height:11px;background:#000;border:1px solid #cdcdcd;"></div>
<span class="t" style="left:317.16px;top:600.00px;height:16px;line-height:16px;font-size:12.5px;color:#dcdcdc;transform:scaleX(0.8400);">52</span>
<div style="left:339px;top:594px;width:14px;height:11px;background:#000;border:1px solid #d2d2d2;"></div>
<span class="t" style="left:341.16px;top:593.00px;height:16px;line-height:16px;font-size:12.5px;color:#dcdcdc;transform:scaleX(0.8400);">56</span>
<div style="left:362px;top:601px;width:14px;height:11px;background:#000;border:1px solid #d6d6d6;"></div>
<span class="t" style="left:364.16px;top:600.00px;height:16px;line-height:16px;font-size:12.5px;color:#dcdcdc;transform:scaleX(0.8400);">60</span>
<div style="left:386px;top:594px;width:14px;height:11px;background:#000;border:1px solid #dbdbdb;"></div>
<span class="t" style="left:388.16px;top:593.00px;height:16px;line-height:16px;font-size:12.5px;color:#dcdcdc;transform:scaleX(0.8400);">64</span>
<div style="left:409px;top:601px;width:14px;height:11px;background:#000;border:1px solid #dfdfdf;"></div>
<span class="t" style="left:411.16px;top:600.00px;height:16px;line-height:16px;font-size:12.5px;color:#dcdcdc;transform:scaleX(0.8400);">68</span>
<div style="left:433px;top:594px;width:14px;height:11px;background:#000;border:1px solid #e3e3e3;"></div>
<span class="t" style="left:435.16px;top:593.00px;height:16px;line-height:16px;font-size:12.5px;color:#dcdcdc;transform:scaleX(0.8400);">72</span>
<div style="left:456px;top:601px;width:14px;height:11px;background:#000;border:1px solid #e7e7e7;"></div>
<span class="t" style="left:458.16px;top:600.00px;height:16px;line-height:16px;font-size:12.5px;color:#dcdcdc;transform:scaleX(0.8400);">76</span>
<div style="left:480px;top:594px;width:14px;height:11px;background:#000;border:1px solid #ebebeb;"></div>
<span class="t" style="left:482.16px;top:593.00px;height:16px;line-height:16px;font-size:12.5px;color:#dcdcdc;transform:scaleX(0.8400);">80</span>
<div style="left:504px;top:601px;width:14px;height:11px;background:#000;border:1px solid #efefef;"></div>
<span class="t" style="left:506.16px;top:600.00px;height:16px;line-height:16px;font-size:12.5px;color:#dcdcdc;transform:scaleX(0.8400);">84</span>
<div style="left:527px;top:594px;width:14px;height:11px;background:#000;border:1px solid #f3f3f3;"></div>
<span class="t" style="left:529.16px;top:593.00px;height:16px;line-height:16px;font-size:12.5px;color:#dcdcdc;transform:scaleX(0.8400);">88</span>
<div style="left:551px;top:601px;width:14px;height:11px;background:#000;border:1px solid #f7f7f7;"></div>
<span class="t" style="left:553.16px;top:600.00px;height:16px;line-height:16px;font-size:12.5px;color:#dcdcdc;transform:scaleX(0.8400);">92</span>
<div style="left:574px;top:594px;width:14px;height:11px;background:#000;border:1px solid #fbfbfb;"></div>
<span class="t" style="left:576.16px;top:593.00px;height:16px;line-height:16px;font-size:12.5px;color:#dcdcdc;transform:scaleX(0.8400);">96</span>
<div style="left:595px;top:601px;width:20px;height:11px;background:#000;border:1px solid #ffffff;"></div>
<span class="t" style="left:596.84px;top:600.00px;height:16px;line-height:16px;font-size:12.5px;color:#dcdcdc;transform:scaleX(0.8400);">100</span>
<div style="left:614px;top:354px;width:1px;height:261px;background:#969696;"></div>
<div style="left:615px;top:353px;width:1px;height:262px;background:#a0a0a0;"></div>
<div style="left:616px;top:353px;width:1px;height:263px;background:#ffffff;"></div>
<div style="left:617px;top:353px;width:1px;height:265px;background:#a0a0a0;"></div>
<div style="left:614px;top:367px;width:1px;height:1px;background:#008000;"></div>
<div style="left:614px;top:418px;width:1px;height:1px;background:#008000;"></div>
<div style="left:614px;top:469px;width:1px;height:1px;background:#008000;"></div>
<div style="left:614px;top:520px;width:1px;height:1px;background:#008000;"></div>
<div style="left:614px;top:570px;width:1px;height:1px;background:#008000;"></div>
<div style="left:614px;top:575px;width:1px;height:1px;background:#008000;"></div>
<div style="left:0px;top:614px;width:618px;height:2px;background:#8c8c8c;"></div>
<div style="left:0px;top:615px;width:618px;height:1px;background:#a0a0a0;"></div>
<div style="left:0px;top:616px;width:618px;height:1px;background:#ffffff;"></div>
<div style="left:0px;top:617px;width:618px;height:1px;background:#b0b0b0;"></div>
<div style="left:0px;top:618px;width:618px;height:33px;background:#fdfdfd;"></div>
<div style="left:0px;top:651px;width:618px;height:1px;background:#969696;"></div>
<div style="left:175px;top:623px;width:144px;height:24px;background:#f0f0f0;"></div>
<div style="left:175px;top:623px;width:142px;height:22px;background:transparent;border:1px solid #6a6a6a;"></div>
<div style="left:176px;top:624px;width:141px;height:21px;background:transparent;border-top:1px solid #fff;border-left:1px solid #fff;"></div>
<div style="left:176px;top:624px;width:141px;height:21px;background:transparent;border-right:1px solid #6a6a6a;border-bottom:1px solid #6a6a6a;"></div>
<div style="left:177px;top:625px;width:139px;height:19px;background:transparent;border-right:1px solid #a0a0a0;border-bottom:1px solid #a0a0a0;"></div>
<div style="left:178px;top:627px;width:135px;height:14px;background:transparent;border:1px dotted #000;"></div>
<svg style="left:178px;top:626px" width="18" height="17" viewBox="0 0 18 17"><path d="M1.8 10.2 L6.4 14.6 L16 3.2" fill="none" stroke="#14147a" stroke-width="3.2"/><path d="M2 9.4 L6.5 13.6 L15.8 2.6" fill="none" stroke="#0b8a0b" stroke-width="2.9"/><path d="M2.2 8.7 L6.5 12.6 L15.4 2.0" fill="none" stroke="#2ecf2e" stroke-width="1.1"/></svg>
<span class="t" style="left:200.20px;top:628.00px;height:16px;line-height:16px;font-size:12.5px;color:#000;transform:scaleX(0.8498);">Beenden und <u>S</u>peichern</span>
<div style="left:334px;top:623px;width:93px;height:24px;background:#f0f0f0;"></div>
<div style="left:334px;top:623px;width:92px;height:23px;background:transparent;border-top:1px solid #fff;border-left:1px solid #fff;"></div>
<div style="left:334px;top:623px;width:92px;height:23px;background:transparent;border-right:1px solid #696969;border-bottom:1px solid #696969;"></div>
<div style="left:335px;top:624px;width:90px;height:21px;background:transparent;border-right:1px solid #a0a0a0;border-bottom:1px solid #a0a0a0;"></div>
<svg style="left:352px;top:627px" width="16" height="17" viewBox="0 0 16 17"><path d="M2.0 2.4 L13.2 13.8" stroke="#e80000" stroke-width="2.9" fill="none"/><path d="M13.6 1.4 L1.2 14.4" stroke="#e80000" stroke-width="3.5" fill="none"/><path d="M2.5 2.9 L13.4 14.0" stroke="#800000" stroke-width="2.3" fill="none"/><path d="M13.8 1.9 L1.6 14.7" stroke="#800000" stroke-width="2.9" fill="none"/></svg>
<span class="t" style="left:372.50px;top:628.00px;height:16px;line-height:16px;font-size:12.5px;color:#000;transform:scaleX(0.8269);">Abbruch</span>
</body></html>
